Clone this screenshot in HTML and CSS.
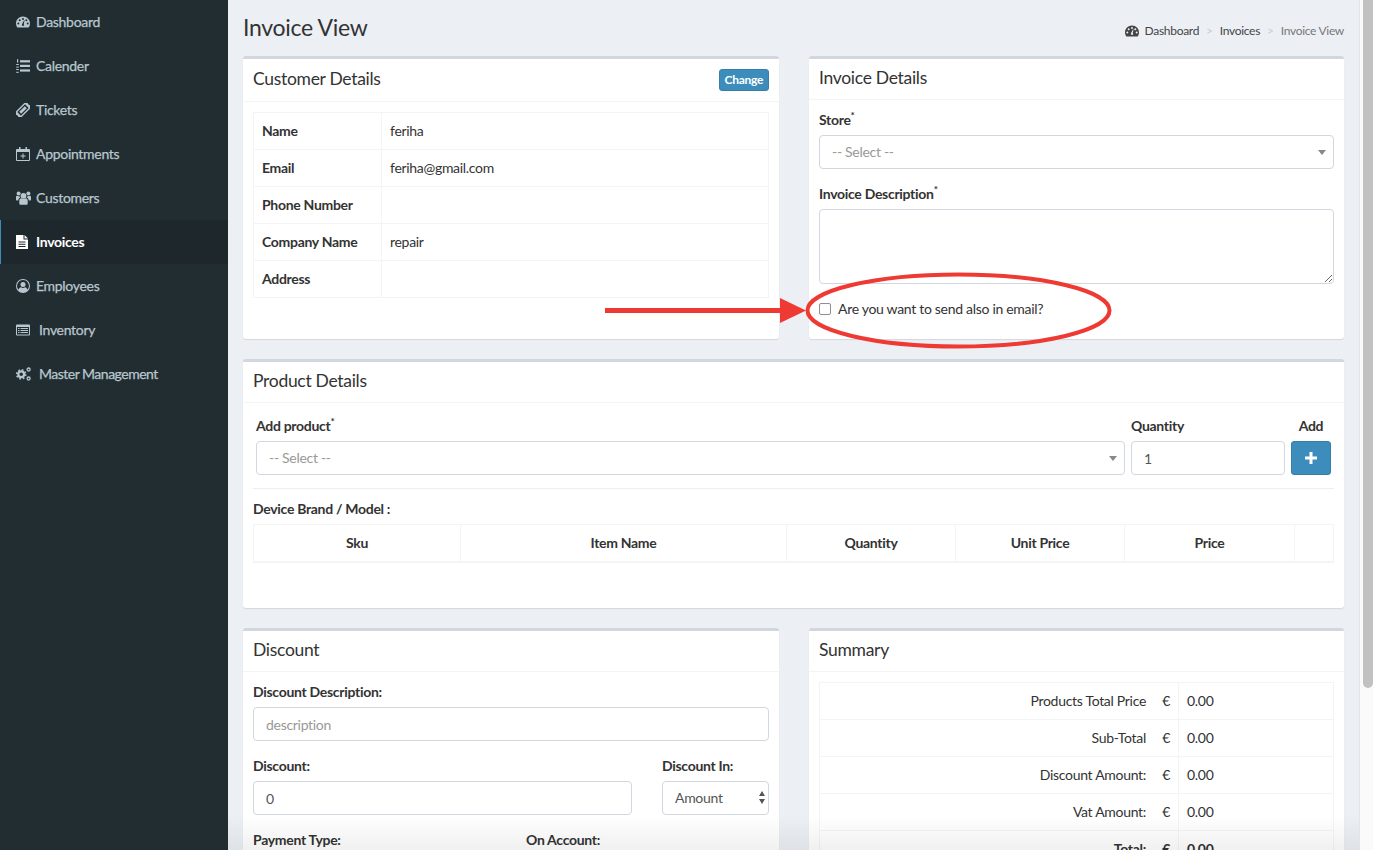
FILE: index.html
```html
<!DOCTYPE html>
<html lang="en">

<head>
    <meta charset="UTF-8">
    <meta name="viewport" content="width=device-width, initial-scale=1.0">
    <title>Invoice View</title>
    <link rel="stylesheet" href="styles.css">
</head>

<body>
    <svg class="sprite" width="0" height="0">
        <symbol id="i-dash" viewBox="0 0 14 12">
            <path fill-rule="evenodd" d="M7 .5C3.100.5 0 3.700 0 7.500c0 1.400.4 2.600 1 3.600.1.200.3.4.5.4h11c.2 0 .4-.2.5-.4.600-1 1-2.200 1-3.600C14 3.700 10.900.5 7 .5zM7 1.900a1 1 0 1 1 0 2 1 1 0 0 1 0-2zM3.700 3.300a1 1 0 1 1 0 2 1 1 0 0 1 0-2zM10.300 3.300a1 1 0 1 1 0 2 1 1 0 0 1 0-2zM2.300 6.500a1 1 0 1 1 0 2 1 1 0 0 1 0-2zM11.700 6.500a1 1 0 1 1 0 2 1 1 0 0 1 0-2zM6 8.200 8 4.400l.6.2-.9 3.700c.3.3.5.600.5 1a1.200 1.200 0 1 1-2.200-1.100z" />
        </symbol>
    </svg>

    <div class="app">
        <nav class="sidebar">
            <a class="nav-item" href="#">
                <svg class="nav-icon" viewBox="0 0 14 12"><use href="#i-dash" /></svg>Dashboard
            </a>
            <a class="nav-item" href="#">
                <svg class="nav-icon" viewBox="0 0 14 14" fill="currentColor"><rect x="4" y="1.200" width="10" height="2.200" /><rect x="4" y="5.800" width="10" height="2.200" /><rect x="4" y="10.400" width="10" height="2.200" /><rect x="1" y=".2" width="1.200" height="3.400" /><rect x=".2" y="5" width="2.600" height="1" /><rect x=".2" y="7.600" width="2.600" height="1" /><rect x=".2" y="10" width="2.600" height="1" /><rect x=".2" y="12.800" width="2.600" height="1" /></svg>Calender
            </a>
            <a class="nav-item" href="#">
                <svg class="nav-icon" viewBox="0 0 14 14" fill="currentColor"><g transform="rotate(-45 7 7)"><path fill-rule="evenodd" d="M-1.500 3h17v2.200c-1 .2-1 3.400 0 3.600V11h-17V8.800c1-.2 1-3.400 0-3.600zM1.500 4.400v5.200h11V4.400z" /><rect x="3" y="5.600" width="8" height="2.800" /></g></svg>Tickets
            </a>
            <a class="nav-item" href="#">
                <svg class="nav-icon" viewBox="0 0 14 14" fill="currentColor"><path fill-rule="evenodd" d="M3 0h1.500v2h5V0H11v2h2a1 1 0 0 1 1 1v10a1 1 0 0 1-1 1H1a1 1 0 0 1-1-1V3a1 1 0 0 1 1-1h2zM1 5v8h12V5z" /><path d="M6.500 6.500h1v2h2v1h-2v2h-1v-2h-2v-1h2z" /></svg>Appointments
            </a>
            <a class="nav-item" href="#">
                <svg class="nav-icon icon-users" viewBox="0 0 15 14" fill="currentColor"><circle cx="7.500" cy="4.800" r="2.900" /><circle cx="2.600" cy="2.600" r="2" /><circle cx="12.400" cy="2.600" r="2" /><path d="M3.300 9.800c0-1.700 1-2.500 2.100-2.500.6.500 1.300.8 2.100.8s1.500-.3 2.100-.8c1.100 0 2.100.8 2.100 2.500V12.400c0 .9-.6 1.400-1.400 1.400H4.700c-.8 0-1.400-.5-1.400-1.400z" /><path d="M0 6c0-.8.5-1.300 1.200-1.300.4.300.9.500 1.400.5.300 0 .6 0 .8-.1.100.7.400 1.300.8 1.700C3 7.100 2.300 8 2.200 9.500H.8C.3 9.500 0 9.200 0 8.700zM15 6c0-.8-.5-1.300-1.200-1.300-.4.300-.9.500-1.400.5-.3 0-.6 0-.8-.1-.1.700-.4 1.300-.8 1.700 1.200.3 1.900 1.200 2 2.700h1.400c.5 0 .8-.3.800-.8z" /></svg>Customers
            </a>
            <a class="nav-item active" href="#">
                <svg class="nav-icon icon-file" viewBox="0 0 12 14" fill="currentColor"><path fill-rule="evenodd" d="M0 0h7.500v4.500H12V14H0zM2.500 6.500v1h7v-1zM2.500 8.800v1h7v-1zM2.500 11v1h7v-1z" /><path d="M8.500 0 12 3.500H8.500z" /></svg>Invoices
            </a>
            <a class="nav-item" href="#">
                <svg class="nav-icon" viewBox="0 0 14 14" fill="currentColor"><path fill-rule="evenodd" d="M7 0a7 7 0 1 1 0 14A7 7 0 0 1 7 0zm0 1.100a5.900 5.900 0 0 0-4.500 9.700c.5-1.400 1.300-2.300 2.500-2.500.5.400 1.200.7 2 .7s1.500-.3 2-.7c1.200.2 2 1.100 2.500 2.500A5.900 5.900 0 0 0 7 1.100z" /><circle cx="7" cy="5.500" r="2.500" /></svg>Employees
            </a>
            <a class="nav-item wide" href="#">
                <svg class="nav-icon" viewBox="0 0 14 12" fill="currentColor"><path fill-rule="evenodd" d="M1 .5h12a1 1 0 0 1 1 1v9a1 1 0 0 1-1 1H1a1 1 0 0 1-1-1v-9a1 1 0 0 1 1-1zM1 3v7.300c0 .1.100.2.200.2h11.600c.1 0 .2-.1.200-.2V3zM2 4h1.500v1H2zM4.500 4H12v1H4.500zM2 6h1.500v1H2zM4.500 6H12v1H4.500zM2 8h1.500v1H2zM4.500 8H12v1H4.500z" /></svg>Inventory
            </a>
            <a class="nav-item wide tight" href="#">
                <svg class="nav-icon icon-cogs" viewBox="0 0 15 14"><g fill="none" stroke="currentColor"><circle cx="5.200" cy="7.300" r="2.900" stroke-width="2.200" /><circle cx="5.200" cy="7.300" r="4.600" stroke-width="1.400" stroke-dasharray="1.800 1.810" /><circle cx="12.600" cy="2.500" r="1.500" stroke-width="1.300" /><circle cx="12.600" cy="11.500" r="1.500" stroke-width="1.300" /></g></svg>Master Management
            </a>
        </nav>

        <main class="main">
            <header class="page-head">
                <h1>Invoice View</h1>
                <ol class="breadcrumb">
                    <li><svg class="crumb-icon" viewBox="0 0 14 12"><use href="#i-dash" /></svg><a href="#">Dashboard</a></li>
                    <li class="sep">&gt;</li>
                    <li><a href="#">Invoices</a></li>
                    <li class="sep">&gt;</li>
                    <li class="current">Invoice View</li>
                </ol>
            </header>

            <div class="row">
                <section class="card">
                    <div class="card-head">
                        <h3>Customer Details</h3>
                        <button class="btn-change" type="button">Change</button>
                    </div>
                    <div class="card-body">
                        <table class="tbl details">
                            <tr><th>Name</th><td>feriha</td></tr>
                            <tr><th>Email</th><td>feriha@gmail.com</td></tr>
                            <tr><th>Phone Number</th><td></td></tr>
                            <tr><th>Company Name</th><td>repair</td></tr>
                            <tr><th>Address</th><td></td></tr>
                        </table>
                    </div>
                </section>

                <section class="card">
                    <div class="card-head">
                        <h3>Invoice Details</h3>
                    </div>
                    <div class="card-body">
                        <div class="field">
                            <label>Store<sup>*</sup></label>
                            <div class="select-wrap"><select class="control muted"><option>-- Select --</option></select></div>
                        </div>
                        <div class="field">
                            <label>Invoice Description<sup>*</sup></label>
                            <textarea class="control area"></textarea>
                        </div>
                        <label class="check"><input type="checkbox">Are you want to send also in email?</label>
                    </div>
                </section>
            </div>

            <section class="card">
                <div class="card-head">
                    <h3>Product Details</h3>
                </div>
                <div class="card-body product-body">
                    <div class="add-row">
                        <div>
                            <label>Add product<sup>*</sup></label>
                            <div class="select-wrap"><select class="control muted"><option>-- Select --</option></select></div>
                        </div>
                        <div>
                            <label>Quantity</label>
                            <input class="control" type="text" value="1">
                        </div>
                        <div class="add-col">
                            <label>Add</label>
                            <button class="btn-add" type="button">
                                <svg viewBox="0 0 14 14" width="14" height="14" fill="#fff"><path d="M5.500 1h3v4.500H13v3H8.500V13h-3V8.500H1v-3h4.500z" /></svg>
                            </button>
                        </div>
                    </div>
                    <hr>
                    <label>Device Brand / Model :</label>
                    <table class="tbl products">
                        <tr>
                            <th class="c-sku">Sku</th>
                            <th class="c-name">Item Name</th>
                            <th class="c-num">Quantity</th>
                            <th class="c-num">Unit Price</th>
                            <th class="c-price">Price</th>
                            <th></th>
                        </tr>
                    </table>
                </div>
            </section>

            <div class="row">
                <section class="card">
                    <div class="card-head">
                        <h3>Discount</h3>
                    </div>
                    <div class="card-body">
                        <div class="field">
                            <label>Discount Description:</label>
                            <input class="control" type="text" placeholder="description">
                        </div>
                        <div class="field discount-row">
                            <div>
                                <label>Discount:</label>
                                <input class="control" type="text" value="0">
                            </div>
                            <div>
                                <label>Discount In:</label>
                                <div class="select-wrap spinner"><select class="control"><option>Amount</option></select></div>
                            </div>
                        </div>
                        <div class="field pay-row">
                            <label>Payment Type:</label>
                            <label>On Account:</label>
                        </div>
                    </div>
                </section>

                <section class="card">
                    <div class="card-head">
                        <h3>Summary</h3>
                    </div>
                    <div class="card-body">
                        <table class="tbl summary">
                            <tr><td class="s-label">Products Total Price<span class="euro">€</span></td><td>0.00</td></tr>
                            <tr><td class="s-label">Sub-Total<span class="euro">€</span></td><td>0.00</td></tr>
                            <tr><td class="s-label">Discount Amount:<span class="euro">€</span></td><td>0.00</td></tr>
                            <tr><td class="s-label">Vat Amount:<span class="euro">€</span></td><td>0.00</td></tr>
                            <tr class="total"><td class="s-label">Total:<span class="euro">€</span></td><td>0.00</td></tr>
                        </table>
                    </div>
                </section>
            </div>

            <div class="fade"></div>
        </main>

        <div class="scrollbar"><div class="thumb"></div></div>

        <!-- red annotation drawn on top of the screenshot -->
        <svg class="annotation" viewBox="0 0 1373 850" width="1373" height="850">
            <rect x="605" y="308" width="180" height="5" fill="#ee3a32" />
            <path d="M780 298 806 310.500 780 323z" fill="#ee3a32" />
            <ellipse cx="958.500" cy="310.500" rx="151" ry="36" fill="none" stroke="#ee3a32" stroke-width="4" />
        </svg>
    </div>
</body>

</html>
```

FILE: styles.css
```css
* {
    box-sizing: border-box;
}

html,
body {
    margin: 0;
    height: 100%;
    overflow: hidden;
}

body {
    font-family: "Lato", "Noto Sans", sans-serif;
    font-size: 14px;
    line-height: 20px;
    letter-spacing: -.3px;
    color: #333;
    background: #ecf0f5;
}

.sprite {
    display: none;
}

.app {
    position: relative;
    display: flex;
    height: 850px;
    overflow: hidden;
}

/* sidebar */
.sidebar {
    flex: 0 0 228px;
    background: #222d32;
}

.nav-item {
    display: flex;
    align-items: center;
    height: 44px;
    padding-left: 16px;
    color: #b8c7ce;
    text-decoration: none;
    -webkit-text-stroke: .25px;
}

.nav-item.tight {
    letter-spacing: -.5px;
}

.nav-icon {
    width: 14px;
    height: 14px;
    margin-right: 6px;
    flex: none;
    fill: currentColor;
}

.nav-icon.icon-users {
    width: 15px;
    margin-right: 5px;
}

.nav-icon.icon-file {
    width: 12px;
    margin-right: 8px;
}

.nav-item.wide .nav-icon {
    margin-right: 9px;
}

.nav-item.wide .icon-cogs {
    width: 15px;
    margin-right: 8px;
}

.nav-item.active {
    background: #1e282c;
    color: #fff;
    box-shadow: inset 1px 0 0 #3c8dbc;
    font-weight: 700;
    -webkit-text-stroke: 0;
}

/* main column */
.main {
    position: relative;
    flex: 1;
    padding: 0 15px;
    overflow: hidden;
}

.page-head {
    display: flex;
    justify-content: space-between;
    height: 56px;
}

.page-head h1 {
    margin: 14px 0 0;
    font-size: 23px;
    line-height: 26px;
    font-weight: 400;
}

.breadcrumb {
    display: flex;
    align-items: center;
    gap: 7px;
    height: 20px;
    margin: 21px 0 0;
    padding: 0;
    list-style: none;
    font-size: 12px;
}

.breadcrumb a {
    color: #444;
    text-decoration: none;
}

.breadcrumb .sep {
    color: #ccc;
}

.breadcrumb .current {
    color: #777;
}

.crumb-icon {
    width: 14px;
    height: 12px;
    margin-right: 6px;
    fill: #444;
    vertical-align: -2px;
}

.row {
    display: grid;
    grid-template-columns: 536px 535px;
    gap: 30px;
}

.card {
    margin-bottom: 20px;
    background: #fff;
    border-top: 3px solid #d2d6de;
    border-radius: 3px;
    box-shadow: 0 1px 1px rgba(0, 0, 0, .1);
}

.card-head {
    display: flex;
    justify-content: space-between;
    align-items: center;
    padding: 10px;
    border-bottom: 1px solid #f4f4f4;
}

.card-head h3 {
    margin: -1px 0 1px;
    font-size: 17.5px;
    line-height: 20px;
    font-weight: 400;
}

.card-body {
    padding: 10px;
}

label {
    display: block;
    margin-bottom: 5px;
    font-weight: 700;
}

sup {
    font-size: 10px;
    line-height: 0;
}

.field {
    margin-bottom: 15px;
}

.control {
    display: block;
    width: 100%;
    height: 34px;
    padding: 6px 12px;
    font: inherit;
    letter-spacing: inherit;
    color: #555;
    background: #fff;
    border: 1px solid #d2d6de;
    border-radius: 4px;
    appearance: none;
}

.control::placeholder {
    color: #999;
}

.control.muted {
    color: #999;
}

.control.area {
    height: 75px;
}

.select-wrap {
    position: relative;
}

.select-wrap::after {
    content: "";
    position: absolute;
    top: 15px;
    right: 8px;
    border-left: 4px solid transparent;
    border-right: 4px solid transparent;
    border-top: 5px solid #888;
}

.select-wrap.spinner::before {
    content: "";
    position: absolute;
    top: 10px;
    right: 4px;
    border-left: 3px solid transparent;
    border-right: 3px solid transparent;
    border-bottom: 5px solid #555;
}

.select-wrap.spinner::after {
    top: 18px;
    right: 4px;
    border-left-width: 3px;
    border-right-width: 3px;
    border-top-color: #555;
}

.check {
    display: flex;
    align-items: center;
    margin-bottom: 10px;
    font-weight: 400;
}

.check input {
    width: 12px;
    height: 12px;
    margin: 0 7px 0 0;
    appearance: none;
    background: #fff;
    border: 1px solid #8f8f8f;
    border-radius: 2px;
}

/* tables */
.tbl {
    width: 100%;
    border-collapse: collapse;
    table-layout: fixed;
}

.tbl th,
.tbl td {
    height: 37px;
    padding: 8px;
    border: 1px solid #f4f4f4;
    text-align: left;
}

.details th {
    width: 128px;
}

.products {
    margin-bottom: 35px;
}

.products th {
    height: 37px;
    text-align: center;
    border-bottom-width: 2px;
}

.c-sku {
    width: 207px;
}

.c-name {
    width: 326px;
}

.c-num {
    width: 169px;
}

.c-price {
    width: 170px;
}

.product-body hr {
    margin: 13px 0 10px;
    border: 0;
    border-top: 1px solid #eee;
}

.add-row {
    display: grid;
    grid-template-columns: 1fr 154px 40px;
    gap: 6px;
    padding: 3px 3px 0;
}

.add-col {
    text-align: center;
}

.btn-add {
    display: flex;
    align-items: center;
    justify-content: center;
    width: 40px;
    height: 34px;
    padding: 0;
    background: #3c8dbc;
    border: 1px solid #367fa9;
    border-radius: 3px;
}

.btn-change {
    height: 22px;
    padding: 0 5px;
    font: inherit;
    letter-spacing: inherit;
    font-size: 12px;
    font-weight: 700;
    color: #fff;
    background: #3c8dbc;
    border: 1px solid #367fa9;
    border-radius: 3px;
}

.discount-row {
    display: grid;
    grid-template-columns: 379px 107px;
    gap: 30px;
}

.pay-row {
    display: grid;
    grid-template-columns: 273px 1fr;
}

.s-label {
    width: 359px;
    text-align: right !important;
}

.euro {
    display: inline-block;
    width: 24px;
    text-align: right;
}

.total td {
    font-weight: 700;
}

/* bottom fade over the page */
.fade {
    position: absolute;
    left: 0;
    right: 0;
    bottom: 0;
    height: 35px;
    background: linear-gradient(rgba(0, 0, 0, 0), rgba(0, 0, 0, .06));
    pointer-events: none;
}

.scrollbar {
    flex: 0 0 13px;
    padding-left: 3px;
    background: #fafafa;
    border-left: 1px solid #e4e4e4;
}

.thumb {
    width: 10px;
    height: 688px;
    background: #c1c1c1;
    border-radius: 0 0 5px 5px;
}

.annotation {
    position: absolute;
    top: 0;
    left: 0;
    pointer-events: none;
}
```
